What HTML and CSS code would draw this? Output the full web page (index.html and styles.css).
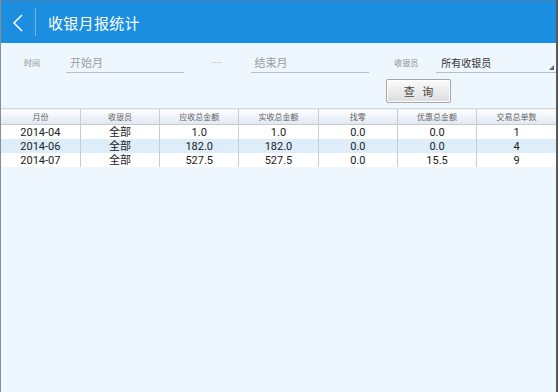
FILE: index.html
```html
<!DOCTYPE html>
<html>
<head>
<meta charset="utf-8">
<link rel="stylesheet" href="styles.css">
</head>
<body>
<div class="app">
  <header class="bar">
    <span class="back">
      <svg width="12" height="18" viewBox="0 0 12 18"><path d="M10 1 L2 9 L10 17" fill="none" stroke="#fff" stroke-width="1.6"/></svg>
    </span>
    <span class="sep"></span>
    <h1 class="title">收银月报统计</h1>
  </header>
  <div class="filters">
    <span class="lbl lbl-time">时间</span>
    <span class="field f-start">开始月</span>
    <span class="dash">- - - -</span>
    <span class="field f-end">结束月</span>
    <span class="lbl lbl-cashier">收银员</span>
    <span class="field f-select">所有收银员<span class="tri"></span></span>
  </div>
  <div class="actions">
    <button class="btn">查&nbsp;&nbsp;&nbsp;询</button>
  </div>
  <table class="grid">
    <thead>
      <tr><th>月份</th><th>收银员</th><th>应收总金额</th><th>实收总金额</th><th>找零</th><th>优惠总金额</th><th>交易总单数</th></tr>
    </thead>
    <tbody>
      <tr><td>2014-04</td><td>全部</td><td>1.0</td><td>1.0</td><td>0.0</td><td>0.0</td><td>1</td></tr>
      <tr class="alt"><td>2014-06</td><td>全部</td><td>182.0</td><td>182.0</td><td>0.0</td><td>0.0</td><td>4</td></tr>
      <tr><td>2014-07</td><td>全部</td><td>527.5</td><td>527.5</td><td>0.0</td><td>15.5</td><td>9</td></tr>
    </tbody>
  </table>
</div>
</body>
</html>
```
FILE: styles.css
```css
html, body { margin: 0; padding: 0; }
body {
  font-family: Roboto, "Noto Sans CJK SC", sans-serif;
  background: #eef6fe;
}
.app {
  width: 558px;
  height: 392px;
  box-sizing: border-box;
  border-left: 1px solid #8a8f94;
  border-right: 2px solid #55595d;
  background: #eef6fe;
  overflow: hidden;
}
.bar {
  height: 43px;
  background: #1b8ee0;
  border-top: 1px solid #4a7fae;
  box-sizing: border-box;
  display: flex;
  align-items: center;
}
.back {
  width: 34px;
  display: flex;
  justify-content: center;
  margin-top: 1px;
}
.sep {
  width: 1px;
  height: 28px;
  background: #6fb8ec;
}
.title {
  margin: 0 0 0 12px;
  font-size: 15px;
  font-weight: normal;
  color: #fff;
  letter-spacing: 0.3px;
  font-family: "Noto Sans CJK SC", sans-serif;
}
.filters {
  display: flex;
  align-items: flex-end;
  height: 20px;
  margin-top: 10px;
  font-family: "Noto Sans CJK SC", sans-serif;
}
.lbl {
  font-size: 8px;
  color: #8a8f94;
  padding-bottom: 5px;
}
.lbl-time { margin-left: 23px; width: 42px; }
.field {
  font-size: 11px;
  color: #9a9ea2;
  border-bottom: 1px solid #b9bec3;
  padding-left: 4px;
  box-sizing: border-box;
  height: 19px;
  line-height: 17px;
  position: relative;
}
.f-start { width: 118px; }
.dash {
  font-family: Roboto, sans-serif;
  font-size: 7px;
  color: #a8acb0;
  margin-left: 28px;
  width: 39px;
  padding-bottom: 6px;
  letter-spacing: -0.5px;
}
.f-end { width: 119px; }
.lbl-cashier { margin-left: 25px; width: 42px; }
.f-select { width: 120px; color: #333; padding-left: 5px; font-size: 10px; }
.tri {
  position: absolute;
  right: 2px;
  bottom: 2px;
  width: 0; height: 0;
  border-left: 5px solid transparent;
  border-bottom: 5px solid #666;
}
.actions {
  display: flex;
  padding-left: 385px;
  margin-top: 6px;
}
.btn {
  width: 65px;
  height: 24px;
  border: 1px solid #a4a8ac;
  border-radius: 2px;
  background: linear-gradient(#fbfbfb, #dcdddf);
  box-shadow: inset 0 0 0 1px #fff;
  font-family: "Noto Sans CJK SC", sans-serif;
  font-size: 11px;
  color: #444;
  padding: 0;
}
.grid {
  margin-top: 5px;
  width: 555px;
  border-collapse: collapse;
  table-layout: fixed;
}
.grid th {
  height: 15px;
  padding: 0;
  font-size: 8px;
  font-weight: normal;
  color: #666;
  font-family: "Noto Sans CJK SC", sans-serif;
  background: linear-gradient(#ffffff, #dfe8f1);
  border-left: 1px solid #c4ccd4;
  border-top: 1px solid #d0d7de;
  border-bottom: 1px solid #c4ccd4;
}
.grid th:first-child, .grid td:first-child { border-left: none; }
.grid td {
  height: 14px;
  padding: 0;
  text-align: center;
  font-size: 11px;
  line-height: 13px;
  color: #222;
  background: #fff;
  border-left: 1px solid #c8cdd2;
}
.grid tr.alt td { background: #ddeefa; }
```
